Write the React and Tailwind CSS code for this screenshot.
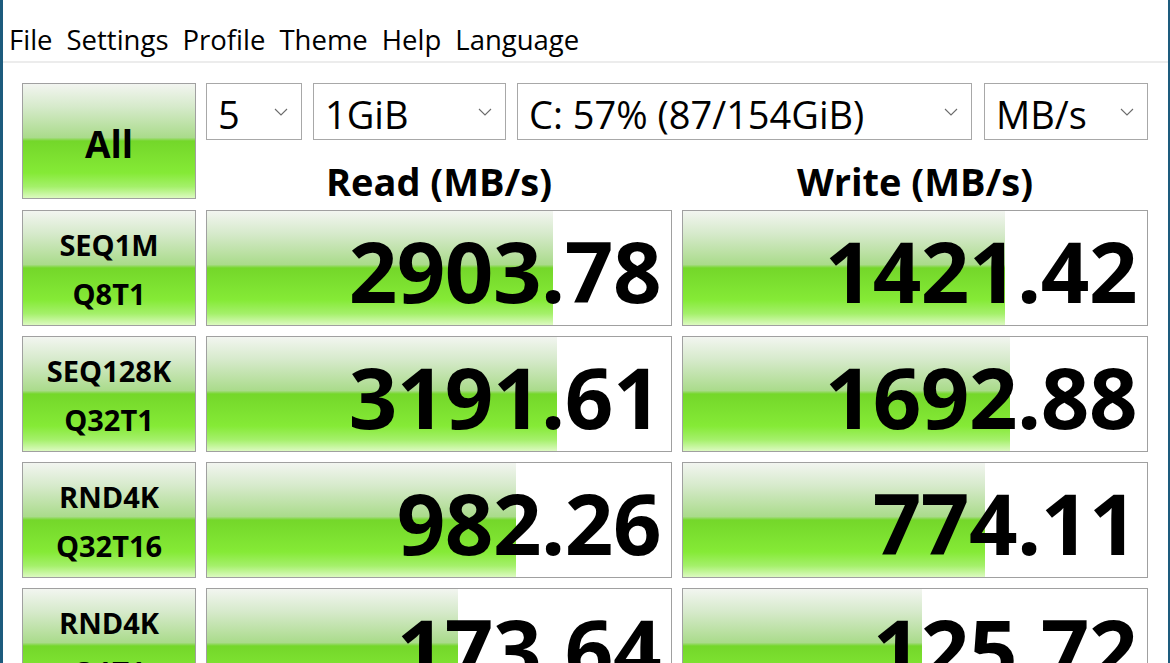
import React from "react";

const GREEN =
  "bg-[linear-gradient(to_bottom,#f2f5f0_0%,#d6eacb_20%,#aadb8b_47%,#74d72a_50%,#85ea36_78%,#a4f06a_90%,#dcfac0_100%)]";

const rows = [
  { name: "SEQ1M", sub: "Q8T1", read: "2903.78", write: "1421.42", rw: 346, ww: 322 },
  { name: "SEQ128K", sub: "Q32T1", read: "3191.61", write: "1692.88", rw: 350, ww: 327 },
  { name: "RND4K", sub: "Q32T16", read: "982.26", write: "774.11", rw: 309, ww: 302 },
  { name: "RND4K", sub: "Q1T1", read: "173.64", write: "125.72", rw: 251, ww: 239 },
];

const menu = ["File", "Settings", "Profile", "Theme", "Help", "Language"];

function Chevron() {
  return (
    <svg width="14" height="8" viewBox="0 0 14 8" className="shrink-0">
      <path d="M1 1 L7 7 L13 1" fill="none" stroke="#6b6b6b" strokeWidth="1.1" />
    </svg>
  );
}

function Combo({ value, width }) {
  return (
    <div
      className="h-[57px] border border-[#a8a8a8] bg-white flex items-center justify-between pl-[11px] pr-[13px]"
      style={{ width }}
    >
      <span className="text-[38px] leading-none text-black pt-[4px]">{value}</span>
      <Chevron />
    </div>
  );
}

function Result({ value, fill }) {
  return (
    <div
      className={`h-[116px] border border-[#a0a0a0] bg-white ${GREEN} bg-no-repeat flex items-center justify-end pr-[10px] pt-[4px]`}
      style={{ backgroundSize: `${fill}px 100%` }}
    >
      <span className="text-[85px] font-bold leading-[100px] text-black tracking-[-0.5px]">{value}</span>
    </div>
  );
}

export default function App() {
  return (
    <div
      className="w-[1170px] h-[663px] overflow-hidden bg-white border-l-[3px] border-r-[2px] border-[#1d5b7d] text-black"
      style={{ fontFamily: '"Open Sans", "Noto Sans", sans-serif' }}
    >
      {/* Menu bar */}
      <div className="h-[63px] border-b-2 border-[#ececec] flex items-center gap-[14px] pl-[6px] pt-[18px]">
        {menu.map((m) => (
          <span key={m} className="text-[27.5px] leading-none">
            {m}
          </span>
        ))}
      </div>

      {/* Main grid */}
      <div className="pl-[19px] pt-[20px] grid grid-cols-[174px_466px_466px] gap-[10px]">
        <div className={`h-[116px] border border-[#a0a0a0] ${GREEN} flex items-center justify-center`}>
          <span className="text-[37px] font-bold leading-none pt-[4px]">All</span>
        </div>
        <div className="col-span-2 flex flex-col">
          <div className="flex gap-[11px]">
            <Combo value="5" width={96} />
            <Combo value="1GiB" width={193} />
            <Combo value="C: 57% (87/154GiB)" width={455} />
            <div className="ml-[1px]">
              <Combo value="MB/s" width={164} />
            </div>
          </div>
          <div className="grid grid-cols-2 gap-[10px] flex-1 items-center pt-[22px]">
            <div className="text-center text-[38px] font-bold leading-none">Read (MB/s)</div>
            <div className="text-center text-[38px] font-bold leading-none">Write (MB/s)</div>
          </div>
        </div>

        {rows.map((r, i) => (
          <React.Fragment key={i}>
            <div
              className={`h-[116px] border border-[#a0a0a0] ${GREEN} flex flex-col items-center justify-center gap-[20px] pt-[2px]`}
            >
              <span className="text-[29px] font-bold leading-none">{r.name}</span>
              <span className="text-[29px] font-bold leading-none">{r.sub}</span>
            </div>
            <Result value={r.read} fill={r.rw} />
            <Result value={r.write} fill={r.ww} />
          </React.Fragment>
        ))}
      </div>
    </div>
  );
}
